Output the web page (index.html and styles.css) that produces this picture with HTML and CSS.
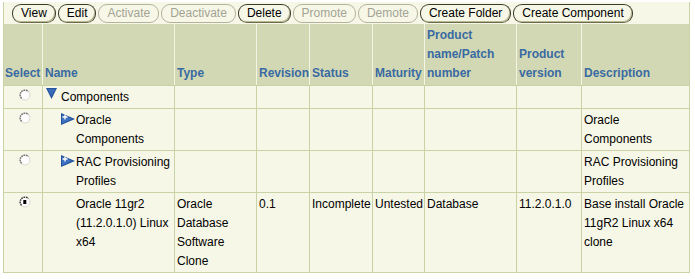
FILE: index.html
```html
<!DOCTYPE html>
<html>
<head>
<meta charset="utf-8">
<title>Components</title>
<link rel="stylesheet" href="styles.css">
</head>
<body>
<div class="page">
	<div class="toolbar">
		<button class="btn">View</button>
		<button class="btn">Edit</button>
		<button class="btn off">Activate</button>
		<button class="btn off">Deactivate</button>
		<button class="btn">Delete</button>
		<button class="btn off">Promote</button>
		<button class="btn off">Demote</button>
		<button class="btn">Create Folder</button>
		<button class="btn">Create Component</button>
	</div>
	<table class="grid">
		<colgroup>
			<col class="c-sel"><col class="c-name"><col class="c-type"><col class="c-rev"><col class="c-status"><col class="c-mat"><col class="c-prod"><col class="c-ver"><col class="c-desc">
		</colgroup>
		<tr class="head">
			<th>Select</th><th>Name</th><th>Type</th><th>Revision</th><th>Status</th><th>Maturity</th><th>Product name/Patch number</th><th>Product version</th><th>Description</th>
		</tr>
		<tr>
			<td class="sel"><svg class="radio" width="12" height="12" viewBox="0 0 12 12"><circle cx="6" cy="6" r="5" fill="#fff" stroke="#d8d8d0" stroke-width="1"/><path d="M2.6 9.4A4.8 4.8 0 0 1 9.4 2.6" fill="none" stroke="#777" stroke-width="1.5" stroke-dasharray="1.6 0.8"/></svg></td>
			<td><div class="node lvl0"><svg class="tri" width="11" height="12" viewBox="0 0 11 12"><path d="M0 0H11L5.5 11Z" fill="#24529c"/><path d="M1.5 1H9.5L5.5 8Z" fill="#3a6bb8"/></svg>Components</div></td>
			<td></td><td></td><td></td><td></td><td></td><td></td><td></td>
		</tr>
		<tr>
			<td class="sel"><svg class="radio" width="12" height="12" viewBox="0 0 12 12"><circle cx="6" cy="6" r="5" fill="#fff" stroke="#d8d8d0" stroke-width="1"/><path d="M2.6 9.4A4.8 4.8 0 0 1 9.4 2.6" fill="none" stroke="#777" stroke-width="1.5" stroke-dasharray="1.6 0.8"/></svg></td>
			<td><div class="node lvl1"><svg class="plus" width="14" height="12" viewBox="0 0 14 12"><path d="M0 0L14 6L0 12Z" fill="#24529c"/><path d="M1 1.5L11 6L1 10.5Z" fill="#3d72c0"/><path d="M4 1.5V6.5M1.5 4H6.5" stroke="#fff" stroke-width="1.3"/></svg>Oracle<br>Components</div></td>
			<td></td><td></td><td></td><td></td><td></td><td></td><td>Oracle Components</td>
		</tr>
		<tr>
			<td class="sel"><svg class="radio" width="12" height="12" viewBox="0 0 12 12"><circle cx="6" cy="6" r="5" fill="#fff" stroke="#d8d8d0" stroke-width="1"/><path d="M2.6 9.4A4.8 4.8 0 0 1 9.4 2.6" fill="none" stroke="#777" stroke-width="1.5" stroke-dasharray="1.6 0.8"/></svg></td>
			<td><div class="node lvl1"><svg class="plus" width="14" height="12" viewBox="0 0 14 12"><path d="M0 0L14 6L0 12Z" fill="#24529c"/><path d="M1 1.5L11 6L1 10.5Z" fill="#3d72c0"/><path d="M4 1.5V6.5M1.5 4H6.5" stroke="#fff" stroke-width="1.3"/></svg>RAC Provisioning<br>Profiles</div></td>
			<td></td><td></td><td></td><td></td><td></td><td></td><td>RAC Provisioning Profiles</td>
		</tr>
		<tr>
			<td class="sel"><svg class="radio" width="12" height="12" viewBox="0 0 12 12"><circle cx="6" cy="6" r="5" fill="#fff" stroke="#d8d8d0" stroke-width="1"/><path d="M2.6 9.4A4.8 4.8 0 0 1 9.4 2.6" fill="none" stroke="#444" stroke-width="1.5" stroke-dasharray="1.6 0.8"/><rect x="4.3" y="4" width="3" height="4" fill="#000"/></svg></td>
			<td><div class="node lvl2">Oracle 11gr2 (11.2.0.1.0) Linux x64</div></td>
			<td>Oracle Database Software Clone</td>
			<td>0.1</td>
			<td>Incomplete</td>
			<td>Untested</td>
			<td>Database</td>
			<td>11.2.0.1.0</td>
			<td>Base install Oracle 11gR2 Linux x64 clone</td>
		</tr>
	</table>
</div>
</body>
</html>
```

FILE: styles.css
```css
*{
	box-sizing: border-box;
	margin: 0;
	padding: 0;
}

body{
	background: #ffffff;
	font-family: "Liberation Sans", Arial, sans-serif;
	font-size: 12px;
	color: #000;
}

.page{
	padding: 2px 0 0 3px;
	width: 690px;
}

.toolbar{
	display: flex;
	gap: 2px;
	align-items: center;
	height: 22px;
	padding: 1px 0 0 8px;
	background: #f7f7e7;
	border-left: 1px solid #c9d3a6;
	border-right: 1px solid #c9d3a6;
}

.btn{
	font-family: "Liberation Sans", Arial, sans-serif;
	font-size: 12px;
	height: 19px;
	line-height: 17px;
	padding: 0 8px;
	background: #f7f7e7;
	color: #000;
	border: 1px solid #3a3a2a;
	border-bottom-color: #6b6b4a;
	border-radius: 9px;
	box-shadow: inset -1px -1px 0 #b9b996;
}

.btn.off{
	color: #a3a394;
	border-color: #b3b39a;
	box-shadow: none;
}

.grid{
	border-collapse: collapse;
	table-layout: fixed;
	width: 687px;
	background: #f7f7e7;
}

.c-sel{ width: 39px; }
.c-name{ width: 132px; }
.c-type{ width: 82px; }
.c-rev{ width: 53px; }
.c-status{ width: 63px; }
.c-mat{ width: 52px; }
.c-prod{ width: 92px; }
.c-ver{ width: 65px; }
.c-desc{ width: 108px; }

.grid th{
	background: #d2d8b3;
	color: #3a6aa2;
	font-weight: bold;
	text-align: left;
	vertical-align: bottom;
	line-height: 19px;
	padding: 0 1px 2px 2px;
	border-left: 1px solid #f4f4e2;
	border-bottom: 1px solid #c9d3a6;
	height: 61px;
}

.grid th:first-child{
	border-left: 1px solid #c9d3a6;
	padding-left: 1px;
}

.grid th:last-child{
	border-right: 1px solid #c9d3a6;
}

.grid td{
	vertical-align: top;
	line-height: 19px;
	padding: 2px 1px 1px 2px;
	border: 1px solid #c9d3a6;
}

.grid td.sel{
	padding-top: 3px;
}

.radio{
	display: block;
	margin: 0 0 0 13px;
}

.node{
	position: relative;
}

.lvl0{
	padding-left: 16px;
}

.lvl1{
	padding-left: 31px;
}

.lvl2{
	padding-left: 31px;
}

.tri{
	position: absolute;
	left: 1px;
	top: 0px;
}

.plus{
	position: absolute;
	left: 16px;
	top: 2px;
}
```
